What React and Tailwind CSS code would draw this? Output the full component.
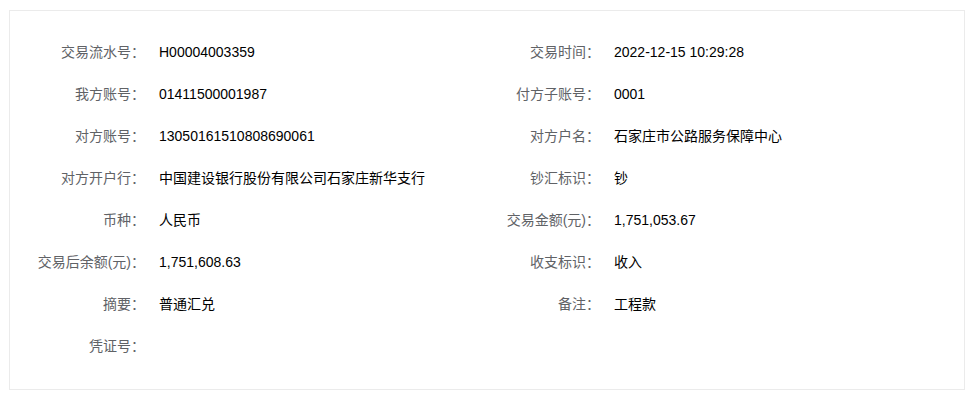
import React from 'react';

const rows = [
  [['交易流水号', 'H00004003359'], ['交易时间', '2022-12-15 10:29:28']],
  [['我方账号', '01411500001987'], ['付方子账号', '0001']],
  [['对方账号', '13050161510808690061'], ['对方户名', '石家庄市公路服务保障中心']],
  [['对方开户行', '中国建设银行股份有限公司石家庄新华支行'], ['钞汇标识', '钞']],
  [['币种', '人民币'], ['交易金额(元)', '1,751,053.67']],
  [['交易后余额(元)', '1,751,608.63'], ['收支标识', '收入']],
  [['摘要', '普通汇兑'], ['备注', '工程款']],
  [['凭证号', ''], null],
];

const Field = ({ label, value }) => (
  <div className="flex items-center h-[42px]">
    <div className="w-[113px] text-right text-[#606266] shrink-0">{label}：</div>
    <div className="pl-[14px] text-[#000]">{value}</div>
  </div>
);

const App = () => {
  return (
    <div
      className="bg-white w-[975px] h-[398px] pt-[10px] pl-[9px] text-[14px] leading-[20px]"
      style={{ fontFamily: '"Liberation Sans", "Noto Sans CJK SC", sans-serif' }}
    >
      <div className="w-[956px] h-[380px] border border-[#ebebeb] px-[22px] py-[20px]">
        {rows.map((row, i) => (
          <div key={i} className="grid grid-cols-2">
            {row.map((f, j) =>
              f ? <Field key={j} label={f[0]} value={f[1]} /> : <div key={j} />
            )}
          </div>
        ))}
      </div>
    </div>
  );
};

export default App;
